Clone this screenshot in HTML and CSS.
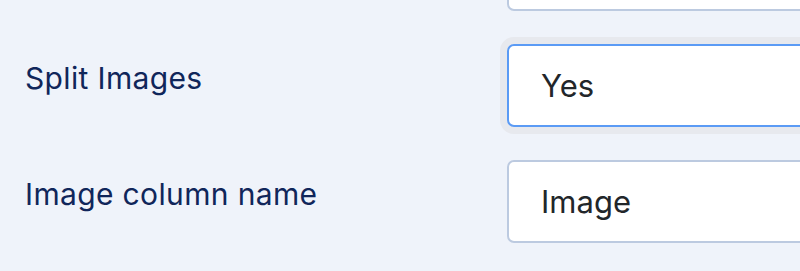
FILE: index.html
```html
<!DOCTYPE html>
<html lang="en">
<head>
<meta charset="utf-8">
<title>Form</title>
<link rel="stylesheet" href="styles.css">
</head>
<body>
<form class="form">
  <div class="row">
    <span class="label"></span>
    <div class="control"><input class="input" type="text" value="" aria-label="Previous field"></div>
  </div>
  <div class="row">
    <label class="label" for="f1">Split Images</label>
    <div class="control"><div id="f1" class="input focused">Yes</div></div>
  </div>
  <div class="row">
    <label class="label" for="f2">Image column name</label>
    <div class="control"><input id="f2" class="input" type="text" value="Image"></div>
  </div>
</form>
</body>
</html>
```

FILE: styles.css
```css
html, body {
  margin: 0;
  padding: 0;
  background: #eff3fa;
  overflow: hidden;
}
body {
  width: 800px;
  height: 271px;
  font-family: Inter, "Noto Sans", sans-serif;
}
.form {
  display: flex;
  flex-direction: column;
  gap: 33px;
  width: 800px;
  margin-top: -72px;
  padding-bottom: 20px;
  overflow: hidden;
}
.row {
  display: flex;
  align-items: flex-start;
}
.label {
  display: block;
  flex: none;
  box-sizing: border-box;
  width: 507px;
  padding-left: 25px;
  padding-top: 14px;
  font-size: 30px;
  letter-spacing: 0.35px;
  color: #10265a;
  line-height: 40px;
}
.control {
  flex: none;
}
.input {
  box-sizing: border-box;
  display: flex;
  align-items: center;
  width: 420px;
  height: 83px;
  margin: 0;
  padding: 0 0 0 32px;
  border: 2px solid #bccae0;
  border-radius: 7px;
  background: #fff;
  font-family: Inter, "Noto Sans", sans-serif;
  font-size: 31px;
  color: #22262a;
  outline: none;
}
.focused {
  border-color: #5b9bf5;
  box-shadow: 0 0 0 7px #e7e9ee;
}
```
